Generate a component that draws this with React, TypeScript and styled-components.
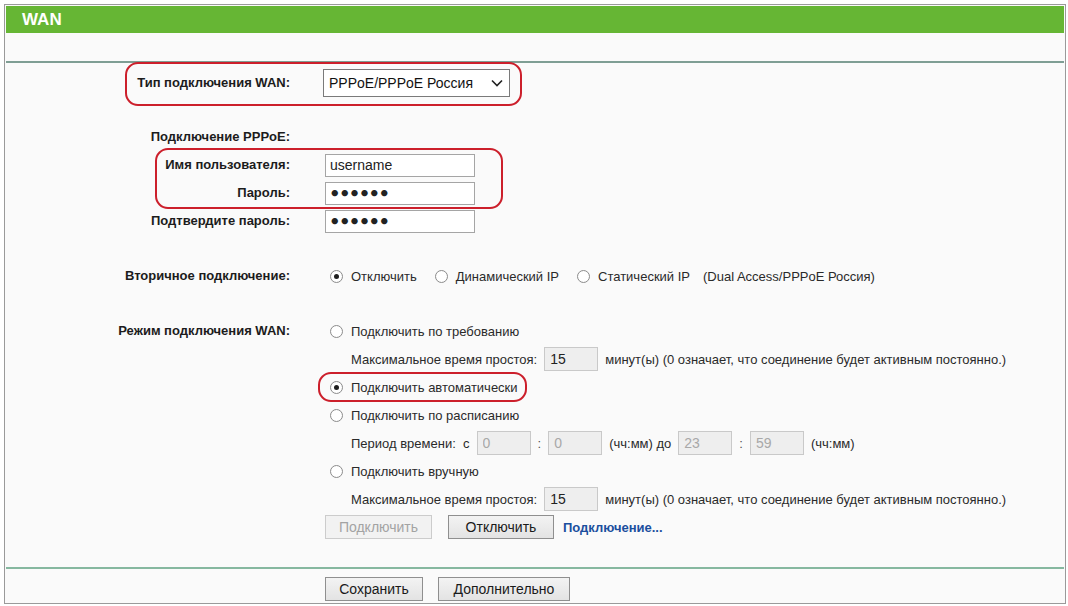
import {FC, ReactNode} from "react";
import styled, {createGlobalStyle} from "styled-components";

const GlobalStyle = createGlobalStyle`
    html, body {
        margin: 0;
        padding: 0;
        background: #ffffff;
    }
    body {
        font-family: "Liberation Sans", Arial, sans-serif;
        font-size: 13px;
        color: #2a2a2a;
    }
`;

const Page = styled.div`
    padding: 4px 4px 0 4px;
`;

const Panel = styled.div`
    width: 1058px;
    border: 1px solid #9a9a9a;
    padding: 1px;
    background: #fafafa;
`;

const Header = styled.div`
    height: 27px;
    background: #66b634;
    color: #ffffff;
    font-weight: bold;
    font-size: 17px;
    line-height: 27px;
    padding-left: 16px;
`;

const SubBar = styled.div`
    height: 28px;
    border-bottom: 2px solid #7f9e94;
`;

const Form = styled.div`
    position: relative;
    padding: 6px 0 26px;
    border-bottom: 2px solid #86b8a0;
`;

const Row = styled.div<{ $gap?: number; $top?: boolean }>`
    display: grid;
    grid-template-columns: 284px 1fr;
    column-gap: 35px;
    align-items: ${(p) => (p.$top ? "start" : "center")};
    min-height: 28px;
    margin-top: ${(p) => p.$gap ?? 0}px;
`;

const Label = styled.div`
    text-align: right;
    font-weight: bold;
    color: #1c1c1c;
    line-height: 28px;
`;

const Value = styled.div`
    display: flex;
    align-items: center;
`;

const Stack = styled.div`
    display: flex;
    flex-direction: column;
`;

const Line = styled.div<{ $indent?: boolean }>`
    display: flex;
    align-items: center;
    height: 28px;
    gap: 7px;
    padding-left: ${(p) => (p.$indent ? 26 : 0)}px;
`;

const SelectBox = styled.div`
    width: 174px;
    height: 26px;
    margin-left: -2px;
    border: 1px solid #7a7a7a;
    background: #ffffff;
    display: flex;
    align-items: center;
    justify-content: space-between;
    padding: 0 6px 0 5px;
    font-size: 14px;
    color: #111;
`;

const TextInput = styled.input`
    box-sizing: border-box;
    width: 150px;
    height: 23px;
    border: 1px solid #a5a5a5;
    background: #ffffff;
    padding: 0 4px;
    font-family: "Liberation Sans", Arial, sans-serif;
    font-size: 14px;
    color: #222;
    outline: none;
`;

const SecretInput = styled(TextInput)`
    font-family: "DejaVu Sans", sans-serif;
    font-size: 18px;
    letter-spacing: -1.6px;
    font-weight: bold;
    padding-left: 3px;
`;

const SmallInput = styled.input<{ $muted?: boolean }>`
    box-sizing: border-box;
    width: 54px;
    height: 24px;
    border: 1px solid #c9c9c9;
    background: #eeeeee;
    padding: 0 5px;
    font-family: "Liberation Sans", Arial, sans-serif;
    font-size: 14px;
    color: ${(p) => (p.$muted ? "#a8a8a8" : "#222")};
    outline: none;
`;

const RadioLabel = styled.label`
    display: inline-flex;
    align-items: center;
    gap: 8px;
    margin-right: 13px;
`;

const Radio = styled.input.attrs({type: "radio"})`
    appearance: none;
    box-sizing: border-box;
    margin: 0 0 0 5px;
    width: 13px;
    height: 13px;
    border-radius: 50%;
    border: 1px solid #8c8c8c;
    background: radial-gradient(circle, #ffffff 60%, #f0f0f0 100%);
    display: grid;
    place-content: center;

    &:checked::after {
        content: "";
        width: 5px;
        height: 5px;
        border-radius: 50%;
        background: #1e1e1e;
    }
`;

const Note = styled.span`
    margin-left: 0;
`;

const Sep = styled.span`
    color: #555;
`;

const Button = styled.button<{ $w: number }>`
    box-sizing: border-box;
    width: ${(p) => p.$w}px;
    height: 24px;
    font-family: "Liberation Sans", Arial, sans-serif;
    font-size: 14px;
    color: #1a1a1a;
    background: linear-gradient(#f3f3f3, #e3e3e3);
    border: 1px solid #8f8f8f;
    padding: 0;

    &:disabled {
        color: #a3a3a3;
        background: #f2f2f2;
        border-color: #cccccc;
    }
`;

const ButtonRow = styled.div`
    display: flex;
    align-items: center;
    gap: 16px;
`;

const Link = styled.a`
    font-weight: bold;
    color: #1b4f9e;
    text-decoration: none;
    margin-left: -7px;
`;

const Footer = styled.div`
    padding: 8px 0 1px 319px;
    display: flex;
    gap: 15px;
`;

const Mark = styled.div<{ $x: number; $y: number; $w: number; $h: number }>`
    position: absolute;
    left: ${(p) => p.$x}px;
    top: ${(p) => p.$y}px;
    width: ${(p) => p.$w}px;
    height: ${(p) => p.$h}px;
    border: 2px solid #cc1f2b;
    border-radius: 13px;
    box-sizing: border-box;
    pointer-events: none;
`;

const Chevron = () => (
    <svg width="12" height="8" viewBox="0 0 12 8">
        <polyline points="1,1.5 6,6.5 11,1.5" fill="none" stroke="#222" strokeWidth="1.6" />
    </svg>
);

const Option: FC<{ name: string; on?: boolean; children: ReactNode }> = ({name, on, children}) => (
    <RadioLabel>
        <Radio name={name} defaultChecked={on} />
        {children}
    </RadioLabel>
);

const IDLE_NOTE = "минут(ы) (0 означает, что соединение будет активным постоянно.)";

export default function App() {
    return (
        <Page>
            <GlobalStyle />
            <Panel>
                <Header>WAN</Header>
                <SubBar />
                <Form>
                    <Row>
                        <Label>Тип подключения WAN:</Label>
                        <Value>
                            <SelectBox>
                                PPPoE/PPPoE Россия
                                <Chevron />
                            </SelectBox>
                        </Value>
                    </Row>

                    <Row $gap={26}>
                        <Label>Подключение PPPoE:</Label>
                        <Value />
                    </Row>
                    <Row>
                        <Label>Имя пользователя:</Label>
                        <Value>
                            <TextInput defaultValue="username" />
                        </Value>
                    </Row>
                    <Row>
                        <Label>Пароль:</Label>
                        <Value>
                            <SecretInput type="password" defaultValue="qwerty" />
                        </Value>
                    </Row>
                    <Row>
                        <Label>Подтвердите пароль:</Label>
                        <Value>
                            <SecretInput type="password" defaultValue="qwerty" />
                        </Value>
                    </Row>

                    <Row $gap={27}>
                        <Label>Вторичное подключение:</Label>
                        <Value>
                            <Option name="second" on>Отключить</Option>
                            <Option name="second">Динамический IP</Option>
                            <Option name="second">Статический IP</Option>
                            <Note>(Dual Access/PPPoE Россия)</Note>
                        </Value>
                    </Row>

                    <Row $gap={27} $top>
                        <Label>Режим подключения WAN:</Label>
                        <Stack>
                            <Line>
                                <Option name="mode">Подключить по требованию</Option>
                            </Line>
                            <Line $indent>
                                Максимальное время простоя:
                                <SmallInput defaultValue="15" />
                                {IDLE_NOTE}
                            </Line>
                            <Line>
                                <Option name="mode" on>Подключить автоматически</Option>
                            </Line>
                            <Line>
                                <Option name="mode">Подключить по расписанию</Option>
                            </Line>
                            <Line $indent>
                                Период времени:&nbsp; с
                                <SmallInput $muted defaultValue="0" />
                                <Sep>:</Sep>
                                <SmallInput $muted defaultValue="0" />
                                (чч:мм) до
                                <SmallInput $muted defaultValue="23" />
                                <Sep>:</Sep>
                                <SmallInput $muted defaultValue="59" />
                                (чч:мм)
                            </Line>
                            <Line>
                                <Option name="mode">Подключить вручную</Option>
                            </Line>
                            <Line $indent>
                                Максимальное время простоя:
                                <SmallInput defaultValue="15" />
                                {IDLE_NOTE}
                            </Line>
                            <Line>
                                <ButtonRow>
                                    <Button $w={107} disabled>Подключить</Button>
                                    <Button $w={106}>Отключить</Button>
                                    <Link href="#">Подключение...</Link>
                                </ButtonRow>
                            </Line>
                        </Stack>
                    </Row>

                    <Mark $x={119} $y={-1} $w={397} $h={44} />
                    <Mark $x={149} $y={85} $w={348} $h={61} />
                    <Mark $x={312} $y={309} $w={209} $h={30} />
                </Form>
                <Footer>
                    <Button $w={98}>Сохранить</Button>
                    <Button $w={132}>Дополнительно</Button>
                </Footer>
            </Panel>
        </Page>
    );
}
